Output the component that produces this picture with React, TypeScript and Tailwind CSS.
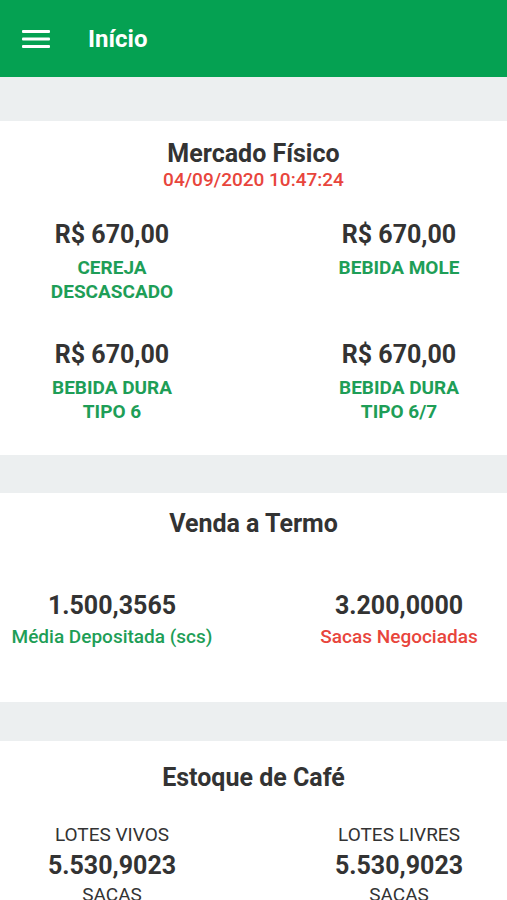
import React from "react";

const font = { fontFamily: "Roboto, 'Noto Sans', Arial, sans-serif" };

function Col({ children }: { children: React.ReactNode }) {
  return <div className="w-[216px] flex flex-col items-center text-center">{children}</div>;
}

function Price({ v }: { v: string }) {
  return <div className="text-[25px] leading-[30px] font-bold text-[#333333]">{v}</div>;
}

function Label({ lines }: { lines: string[] }) {
  return (
    <div className="mt-[6px] text-[19px] leading-[24px] font-bold text-[#1e9e57]">
      {lines.map((l) => (
        <div key={l}>{l}</div>
      ))}
    </div>
  );
}

export default function App() {
  return (
    <div style={font} className="w-[507px] h-[900px] overflow-hidden bg-[#eceff0]">
      <header className="h-[77px] bg-[#05a152] flex items-center pl-[22px]">
        <svg width="28" height="20" viewBox="0 0 28 20" className="mt-[1px]">
          <rect x="0" y="1" width="28" height="3" rx="1" fill="#fff" />
          <rect x="0" y="8.5" width="28" height="3" rx="1" fill="#fff" />
          <rect x="0" y="16" width="28" height="3" rx="1" fill="#fff" />
        </svg>
        <span className="ml-[38px] text-white text-[24px] font-bold leading-none">Início</span>
      </header>

      <div className="h-[44px]" />

      <section className="bg-white h-[334px] pt-[19px]">
        <div className="text-center text-[25px] leading-[28px] font-bold text-[#333333]">Mercado Físico</div>
        <div className="text-center text-[19px] leading-[24px] font-medium text-[#e8453c]">04/09/2020 10:47:24</div>
        <div className="flex justify-between pl-[4px] mt-[28px]">
          <Col>
            <Price v="R$ 670,00" />
            <Label lines={["CEREJA", "DESCASCADO"]} />
          </Col>
          <Col>
            <Price v="R$ 670,00" />
            <Label lines={["BEBIDA MOLE"]} />
          </Col>
        </div>
        <div className="flex justify-between pl-[4px] mt-[36px]">
          <Col>
            <Price v="R$ 670,00" />
            <Label lines={["BEBIDA DURA", "TIPO 6"]} />
          </Col>
          <Col>
            <Price v="R$ 670,00" />
            <Label lines={["BEBIDA DURA", "TIPO 6/7"]} />
          </Col>
        </div>
      </section>

      <div className="h-[38px]" />

      <section className="bg-white h-[209px] pt-[17px]">
        <div className="text-center text-[25px] leading-[28px] font-bold text-[#333333]">Venda a Termo</div>
        <div className="flex justify-between pl-[4px] mt-[53px]">
          <Col>
            <Price v="1.500,3565" />
            <div className="mt-[4px] text-[19px] leading-[24px] font-medium text-[#1e9e57]">Média Depositada (scs)</div>
          </Col>
          <Col>
            <Price v="3.200,0000" />
            <div className="mt-[4px] text-[19px] leading-[24px] font-medium text-[#e8453c]">Sacas Negociadas</div>
          </Col>
        </div>
      </section>

      <div className="h-[39px]" />

      <section className="bg-white h-[400px] pt-[23px]">
        <div className="text-center text-[25px] leading-[28px] font-bold text-[#333333]">Estoque de Café</div>
        <div className="flex justify-between pl-[4px] mt-[32px]">
          {["LOTES VIVOS", "LOTES LIVRES"].map((t) => (
            <Col key={t}>
              <div className="text-[19px] leading-[22px] text-[#333333]">{t}</div>
              <div className="mt-[5px] text-[25px] leading-[30px] font-bold text-[#333333]">5.530,9023</div>
              <div className="mt-[3px] text-[19px] leading-[22px] text-[#333333]">SACAS</div>
            </Col>
          ))}
        </div>
      </section>
    </div>
  );
}
